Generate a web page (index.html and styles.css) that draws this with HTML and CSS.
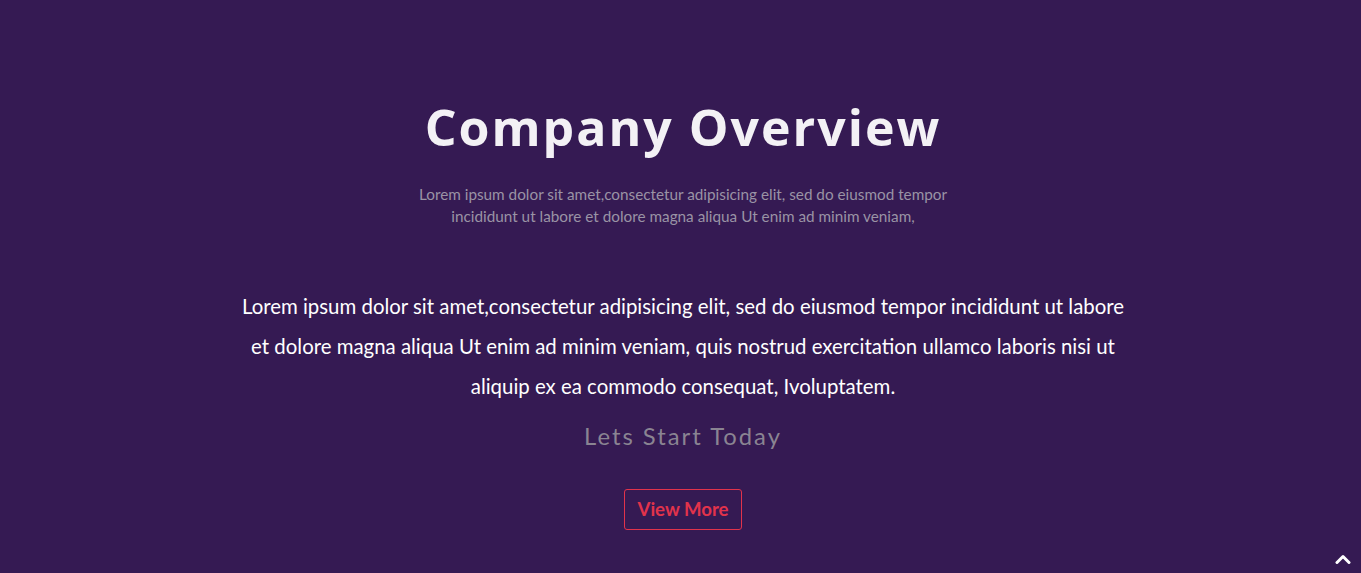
FILE: index.html
```html
<!DOCTYPE html>
<html lang="en">
<head>
<meta charset="utf-8">
<title>Company Overview</title>
<link rel="stylesheet" href="styles.css">
</head>
<body>
<section class="overview">
  <h1 class="title">Company Overview</h1>
  <p class="subtitle">Lorem ipsum dolor sit amet,consectetur adipisicing elit, sed do eiusmod tempor incididunt ut labore et dolore magna aliqua Ut enim ad minim veniam,</p>
  <p class="body-text">Lorem ipsum dolor sit amet,consectetur adipisicing elit, sed do eiusmod tempor incididunt ut labore et dolore magna aliqua Ut enim ad minim veniam, quis nostrud exercitation ullamco laboris nisi ut aliquip ex ea commodo consequat, Ivoluptatem.</p>
  <p class="cta-text">Lets Start Today</p>
  <a class="btn" href="#">View More</a>
</section>
<a class="to-top" href="#" aria-label="Back to top">
  <svg width="16" height="10" viewBox="0 0 16 10"><path d="M2 8.5 L8 2.5 L14 8.5" fill="none" stroke="#fff" stroke-width="3" stroke-linecap="round" stroke-linejoin="round"/></svg>
</a>
</body>
</html>
```

FILE: styles.css
```css
html, body {
  margin: 0;
  padding: 0;
  height: 100%;
  background: #351a53;
}
body {
  font-family: "Lato", "Open Sans", sans-serif;
  overflow: hidden;
}
.overview {
  display: flex;
  flex-direction: column;
  align-items: center;
  text-align: center;
  padding-top: 96px;
  padding-left: 5px;
}
.title {
  margin: 0;
  font-family: "Open Sans", "Liberation Sans", sans-serif;
  font-weight: 700;
  font-size: 50px;
  line-height: 62px;
  color: #f3f1f5;
  letter-spacing: 2px;
}
.subtitle {
  margin: 25px 0 0;
  width: 550px;
  font-size: 15.3px;
  line-height: 22px;
  color: #9a93a5;
}
.body-text {
  margin: 59px 0 0;
  width: 890px;
  font-size: 20.4px;
  line-height: 40px;
  color: #ffffff;
}
.cta-text {
  margin: 15px 0 0;
  font-size: 23.8px;
  line-height: 30px;
  letter-spacing: 2px;
  color: #8a8492;
}
.btn {
  margin-top: 38px;
  display: inline-block;
  box-sizing: border-box;
  width: 118px;
  height: 41px;
  line-height: 39px;
  border: 1px solid #e2334b;
  border-radius: 3px;
  color: #e2334b;
  font-weight: 700;
  font-size: 18.6px;
  text-decoration: none;
}
.to-top {
  position: fixed;
  right: 10px;
  bottom: 9px;
  display: block;
  line-height: 0;
}
```
